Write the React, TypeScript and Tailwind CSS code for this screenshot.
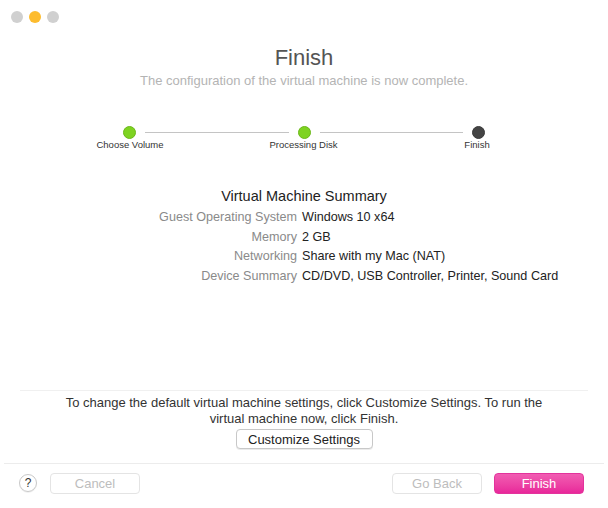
const rows = [
  ['Guest Operating System', 'Windows 10 x64'],
  ['Memory', '2 GB'],
  ['Networking', 'Share with my Mac (NAT)'],
  ['Device Summary', 'CD/DVD, USB Controller, Printer, Sound Card'],
];

const steps = [
  { label: 'Choose Volume', done: true },
  { label: 'Processing Disk', done: true },
  { label: 'Finish', done: false },
];

export default function App() {
  return (
    <div className="w-[608px] h-[508px] bg-white flex flex-col text-[#222] font-['Liberation_Sans',Arial,sans-serif] select-none">
      {/* title bar */}
      <div className="flex items-center gap-[6px] pl-[11px] pt-[7px] h-[26px]">
        <span className="w-3 h-3 rounded-full bg-[#d0d0d0]" />
        <span className="w-3 h-3 rounded-full bg-[#fdbc2e]" />
        <span className="w-3 h-3 rounded-full bg-[#d0d0d0]" />
      </div>

      <div className="flex flex-col items-center">
        <h1 className="mt-[18px] text-[22px] leading-[28px] text-[#555]">Finish</h1>
        <p className="mt-[1px] text-[13px] leading-[16px] text-[#b4b4b4]">
          The configuration of the virtual machine is now complete.
        </p>
      </div>

      {/* stepper */}
      <div className="mt-[37px] mx-auto w-[440px] flex flex-col">
        <div className="flex items-center px-[39px]">
          {steps.map((s, i) => (
            <div key={s.label} className={i < steps.length - 1 ? 'flex items-center flex-1' : 'flex items-center'}>
              <span
                className={
                  s.done
                    ? 'w-[13px] h-[13px] rounded-full bg-[#7ed321] border border-[#6cb81a]'
                    : 'w-[13px] h-[13px] rounded-full bg-[#444] border border-[#3a3a3a]'
                }
              />
              {i < steps.length - 1 && <span className="flex-1 h-px bg-[#c4c4c4] mx-[9px]" />}
            </div>
          ))}
        </div>
        <div className="flex justify-between text-[9.5px] leading-[12px] text-[#333]">
          <span className="w-[100px] text-center -ml-[4px]">Choose Volume</span>
          <span className="w-[100px] text-center">Processing Disk</span>
          <span className="w-[100px] text-center -mr-[3px]">Finish</span>
        </div>
      </div>

      {/* summary */}
      <div className="mt-[36px] flex flex-col items-center">
        <h2 className="text-[14.5px] leading-[18px] text-[#222]">Virtual Machine Summary</h2>
        <div className="mt-[4px] grid grid-cols-[297px_1fr] w-full gap-y-[3px] text-[12.6px] leading-[16.7px]">
          {rows.map(([k, v]) => (
            <div key={k} className="contents">
              <span className="text-right text-[#8a8a8a]">{k}</span>
              <span className="pl-[5px] text-[#222]">{v}</span>
            </div>
          ))}
        </div>
      </div>

      <div className="flex-1" />

      {/* footer note */}
      <div className="mx-[20px] border-t border-[#f0f0f0]" />
      <div className="flex flex-col items-center pt-[4px]">
        <p className="w-[500px] text-center text-[13px] leading-[16px] text-[#333]">
          To change the default virtual machine settings, click Customize Settings. To run the virtual machine now, click Finish.
        </p>
        <button className="mt-[2px] h-[20px] w-[137px] rounded-[4px] border border-[#c8c8c8] bg-white text-[13px] text-[#222] shadow-[0_1px_0_rgba(0,0,0,0.08)]">
          Customize Settings
        </button>
      </div>

      <div className="mt-[14px] mx-[4px] border-t border-[#ececec]" />
      <div className="flex items-center h-[44px] pl-[19px] pr-[24px] pb-[6px]">
        <span className="w-[18px] h-[18px] rounded-full border border-[#c8c8c8] flex items-center justify-center text-[12px] text-[#333] shadow-[0_1px_0_rgba(0,0,0,0.06)]">
          ?
        </span>
        <button className="ml-[13px] w-[90px] h-[21px] rounded-[4px] border border-[#e4e4e4] bg-white text-[13px] text-[#bdbdbd]">
          Cancel
        </button>
        <div className="flex-1" />
        <button className="w-[90px] h-[21px] rounded-[4px] border border-[#e4e4e4] bg-white text-[13px] text-[#bdbdbd]">
          Go Back
        </button>
        <button className="ml-[12px] w-[90px] h-[21px] rounded-[4px] bg-gradient-to-b from-[#f15cb2] to-[#e8269a] text-[13px] text-white border border-[#e3339c]">
          Finish
        </button>
      </div>
    </div>
  );
}
